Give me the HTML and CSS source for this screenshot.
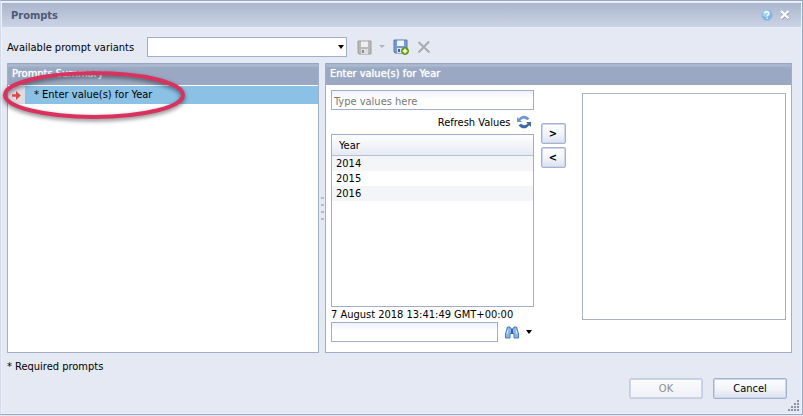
FILE: index.html
```html
<!DOCTYPE html>
<html lang="en">
<head>
  <meta charset="UTF-8">
  <title>Prompts</title>
  <link rel="stylesheet" href="styles.css">
</head>
<body>
  <div class="dialog">
    <div class="titlebar">
      <h1>Prompts</h1>
      <button class="icon-btn" aria-label="Help">
        <svg width="12" height="12" viewBox="0 0 12 12">
          <circle cx="6" cy="6" r="5.5" fill="#7db4e2"/>
          <circle cx="5" cy="4.5" r="3.5" fill="#a5cff0"/>
          <path d="M4 4.4C4 2.2 8 2.2 8 4.4C8 5.8 6.2 5.8 6.2 7.3M6.2 8.6V9.8" fill="none" stroke="#fff" stroke-width="1.4"/>
        </svg>
      </button>
      <button class="icon-btn" aria-label="Close">
        <svg width="12" height="12" viewBox="0 0 12 12">
          <path d="M2.5 3L9.5 10M9.5 3L2.5 10" stroke="#76839b" stroke-width="2.4"/>
          <path d="M2 2L9.5 9.5M9.5 2L2 9.5" stroke="#fff" stroke-width="2.2"/>
        </svg>
      </button>
    </div>

    <div class="toolbar">
      <label for="variants">Available prompt variants</label>
      <div class="combo">
        <select id="variants"><option></option></select>
        <svg width="6" height="4" viewBox="0 0 6 4"><path d="M0 0H6L3 4Z" fill="#000"/></svg>
      </div>
      <button class="icon-btn save" aria-label="Save" disabled>
        <svg width="15" height="15" viewBox="0 0 15 15">
          <path d="M1 1H14V14H2L1 13Z" fill="#b9b9b9" stroke="#9c9c9c"/>
          <path d="M4 1.5H11V7H4Z" fill="#efefef"/>
          <path d="M4 9H11V14H4Z" fill="#dedede"/>
          <path d="M5 10H7V13H5Z" fill="#8f8f8f"/>
        </svg>
      </button>
      <button class="icon-btn save-menu" aria-label="Save options" disabled>
        <svg width="6" height="4" viewBox="0 0 6 4"><path d="M0 0H6L3 3Z" fill="#b0b3bb"/></svg>
      </button>
      <button class="icon-btn save-as" aria-label="Save as">
        <svg width="16" height="16" viewBox="0 0 16 16">
          <path d="M1 1H14V14H2L1 13Z" fill="#7b9bd0" stroke="#5b78ad"/>
          <path d="M4 1.5H11V7H4Z" fill="#eef3fb"/>
          <path d="M4 9H11V14H4Z" fill="#dce4f0"/>
          <path d="M5 10H7V13H5Z" fill="#46639a"/>
          <circle cx="12" cy="12" r="3.5" fill="#76ad1d" stroke="#5c9110"/>
          <path d="M12 9.8V14.2M9.8 12H14.2" stroke="#fff" stroke-width="1.4"/>
        </svg>
      </button>
      <button class="icon-btn" aria-label="Delete" disabled>
        <svg width="14" height="14" viewBox="0 0 14 14">
          <path d="M1.5 2L12.5 12.5M12 1.5L1.5 12.5" stroke="#a9abb1" stroke-width="2"/>
        </svg>
      </button>
    </div>

    <div class="panels">
      <section class="panel summary">
        <h2>Prompts Summary</h2>
        <button class="prompt">
          <span class="marker">
            <svg width="9" height="9" viewBox="0 0 9 9"><path d="M0 3.2H4V0L8.8 4.5L4 9V5.8H0Z" fill="#dc4a45"/></svg>
          </span>
          <span class="prompt-name">* Enter value(s) for Year</span>
        </button>
        <!-- highlight ring -->
        <svg class="ring" width="190" height="58" viewBox="0 0 190 58">
          <ellipse cx="93" cy="28" rx="89" ry="22"/>
        </svg>
      </section>

      <div class="splitter"><i></i><i></i><i></i><i></i></div>

      <section class="panel values">
        <h2>Enter value(s) for Year</h2>
        <div class="values-body">
          <div class="source">
            <input class="field" type="text" placeholder="Type values here" aria-label="Values">
            <button class="refresh">
              Refresh Values
              <svg width="16" height="14" viewBox="0 0 16 14">
                <path d="M1 2V7H6L4.4 5.4C6 3.4 9 3.2 11 5.2L13.6 3.8C10.5 -0.3 5.5 -0.3 2.8 3.8Z" fill="#6d97cf"/>
                <path d="M15 12V7H10L11.6 8.6C10 10.6 7 10.8 5 8.8L2.4 10.2C5.5 14.3 10.5 14.3 13.2 10.2Z" fill="#3f69a8"/>
              </svg>
            </button>
            <div class="list">
              <table>
                <thead><tr><th>Year</th></tr></thead>
                <tbody>
                  <tr><td>2014</td></tr>
                  <tr><td>2015</td></tr>
                  <tr><td>2016</td></tr>
                </tbody>
              </table>
            </div>
            <p class="stamp">7 August 2018 13:41:49 GMT+00:00</p>
            <div class="search">
              <input class="field" type="text" aria-label="Search">
              <button class="icon-btn" aria-label="Find">
                <svg width="14" height="13" viewBox="0 0 14 13">
                  <path d="M2.5 1H5L6 3H8L9 1H11.5L13.5 8V12H9V7.5H5V12H0.5V8Z" fill="#8db4e3" stroke="#4478bd"/>
                  <path d="M6 3H8V8H6Z" fill="#2f62a8"/>
                  <path d="M3 3.5L2 8M11 3.5L12 8" stroke="#d8e8fa"/>
                </svg>
              </button>
              <button class="icon-btn" aria-label="Search options">
                <svg width="6" height="4" viewBox="0 0 6 4"><path d="M0 0H6L3 4Z" fill="#000"/></svg>
              </button>
            </div>
          </div>
          <div class="movers">
            <button class="btn" aria-label="Add value">&gt;</button>
            <button class="btn" aria-label="Remove value">&lt;</button>
          </div>
          <div class="selected"></div>
        </div>
      </section>
    </div>

    <p class="note">* Required prompts</p>

    <div class="actions">
      <button class="btn" disabled>OK</button>
      <button class="btn">Cancel</button>
    </div>

    <svg class="grip" width="12" height="12" viewBox="0 0 12 12">
      <path d="M9 1h2M6 4h2M9 4h2M3 7h2M6 7h2M9 7h2M0 10h2M3 10h2M6 10h2M9 10h2" stroke="#8d93a3" stroke-width="2"/>
    </svg>
  </div>
</body>
</html>
```
FILE: styles.css
```css
* {
  box-sizing: border-box;
  margin: 0;
  padding: 0;
}

body {
  background-color: #e4e9f3;
}

body,
button,
input,
select {
  font: 11px/15px "DejaVu Sans Condensed", "DejaVu Sans", sans-serif;
  color: #000;
}

button {
  border: none;
  background: none;
}

svg {
  display: block;
}

.dialog {
  position: relative;
  min-height: 415px;
  border: 1px solid #98a6c2;
  border-left-color: #d3daea;
  box-shadow: inset 0 0 0 1px #eef2fa;
  background-color: #e4e9f3;
}

.titlebar {
  display: flex;
  align-items: center;
  gap: 6px;
  height: 24px;
  margin: 2px 1px 0;
  padding: 0 10px 0 9px;
  background: linear-gradient(#aab6cd, #cbd4e5);
}

.titlebar h1 {
  flex: 1;
  font-size: 11px;
  font-weight: bold;
  color: #4d5a77;
}

/* variants row */
.toolbar {
  display: flex;
  align-items: center;
  padding: 10px 6px 6px;
}

.toolbar label {
  width: 140px;
  white-space: nowrap;
}

.combo {
  position: relative;
  width: 200px;
  margin-right: 10px;
}

.combo select {
  display: block;
  width: 100%;
  height: 20px;
  appearance: none;
  border: 1px solid #a0aec9;
  border-radius: 0;
  background-color: #fff;
}

.combo svg {
  position: absolute;
  top: 8px;
  right: 3px;
  pointer-events: none;
}

.save {
  margin-right: 7px;
}

.save-menu {
  margin-right: 8px;
}

.save-as {
  margin-right: 8px;
}

/* panels */
.panels {
  display: flex;
  margin: 0 10px 0 6px;
}

.panel {
  position: relative;
  border: 1px solid #a0aec9;
  border-top: none;
  background-color: #fff;
}

.panel h2 {
  height: 22px;
  padding: 0 4px;
  font-size: 11px;
  font-weight: normal;
  line-height: 22px;
  color: #fff;
  text-shadow: 0 0 1px #fff;
  background: linear-gradient(#8e9dbb, #b0bdd3 2px, #9aa8c3 5px);
}

.summary {
  flex: 2;
}

.values {
  flex: 3;
}

.prompt {
  display: flex;
  width: 100%;
  height: 18px;
  margin-top: 1px;
  text-align: left;
  background-color: #8ac1e5;
}

.marker {
  display: flex;
  align-items: center;
  justify-content: center;
  width: 17px;
  height: 18px;
  background-color: #dcdde5;
}

.prompt-name {
  padding-left: 9px;
  line-height: 18px;
}

.ring {
  position: absolute;
  top: 4px;
  left: -7px;
  overflow: visible;
  pointer-events: none;
}

.ring ellipse {
  fill: none;
  stroke: #d9325f;
  stroke-width: 4;
  filter: drop-shadow(0 2px 2px rgba(0, 0, 0, 0.5));
}

.splitter {
  display: flex;
  flex-direction: column;
  align-items: center;
  justify-content: center;
  gap: 5px;
  width: 6px;
}

.splitter i {
  width: 3px;
  height: 2px;
  background-color: #b3bccd;
}

.values-body {
  display: flex;
  padding: 5px 5px 10px;
}

.source {
  display: flex;
  flex-direction: column;
  flex: 1;
}

.field {
  width: 100%;
  height: 20px;
  padding: 2px 2px 0;
  border: 1px solid #a0aec9;
  background: linear-gradient(#eef2fa, #fff 8px);
}

.field::placeholder {
  color: #777;
}

.refresh {
  display: flex;
  align-items: center;
  align-self: flex-end;
  gap: 5px;
  height: 24px;
  padding-right: 2px;
}

.list {
  height: 173px;
  border: 1px solid #a0aec9;
  background-color: #fff;
}

.list table {
  width: 100%;
  border-collapse: collapse;
}

.list th {
  height: 20px;
  padding: 2px 7px 0;
  border-bottom: 1px solid #b4bfd4;
  font-weight: normal;
  text-align: left;
  background: linear-gradient(#fff, #e6eaf3);
}

.list td {
  height: 15px;
  padding: 0 4px;
}

.list tbody tr:nth-child(odd) {
  background-color: #f4f5f8;
}

.stamp {
  white-space: nowrap;
}

.search {
  display: flex;
  align-items: center;
  gap: 7px;
  padding-right: 2px;
}

.search .field {
  flex: 1;
}

.movers {
  display: flex;
  flex-direction: column;
  gap: 3px;
  width: 25px;
  margin: 33px 16px 0 7px;
}

.btn {
  height: 21px;
  border: 1px solid #a5b3cf;
  border-radius: 2px;
  box-shadow: inset 0 0 0 1px #cdd6e9;
  background: linear-gradient(#fdfdff, #f3f5fa 50%, #dce1ee);
}

.movers .btn {
  font-weight: bold;
}

.selected {
  flex: 1;
  margin: 3px 0 22px;
  border: 1px solid #a9b1c2;
}

/* footer */
.note {
  margin: 6px 6px 0;
}

.actions {
  display: flex;
  justify-content: flex-end;
  gap: 10px;
  padding: 4px 15px 15px;
}

.actions .btn {
  width: 74px;
}

.actions .btn:disabled {
  border-color: #c5cee0;
  color: #8d8d8d;
  background: linear-gradient(#fcfcfe, #eef0f6);
}

.grip {
  position: absolute;
  right: 2px;
  bottom: 2px;
}
```
